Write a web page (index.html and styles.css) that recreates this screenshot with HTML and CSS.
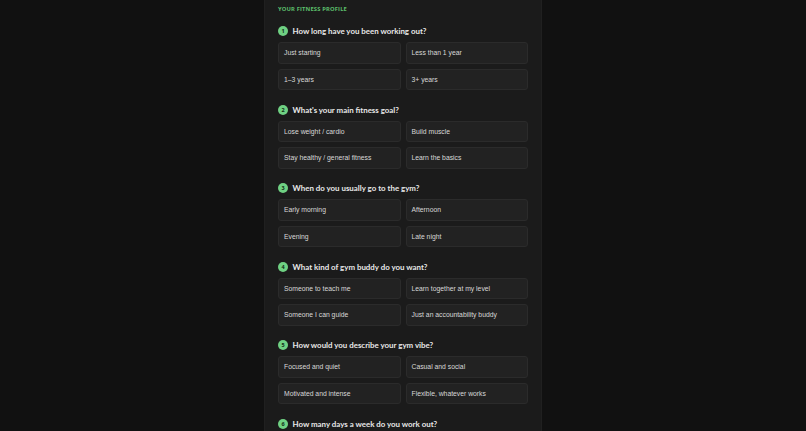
FILE: index.html
```html
<!DOCTYPE html>
<html lang="en">
<head>
<meta charset="utf-8">
<title>Your Fitness Profile</title>
<link rel="stylesheet" href="styles.css">
</head>
<body>
<main class="panel">
  <h1 class="label">Your Fitness Profile</h1>

  <section class="question">
    <h2 class="q-title"><span class="badge">1</span>How long have you been working out?</h2>
    <div class="options">
      <button class="opt">Just starting</button>
      <button class="opt">Less than 1 year</button>
      <button class="opt">1–3 years</button>
      <button class="opt">3+ years</button>
    </div>
  </section>

  <section class="question">
    <h2 class="q-title"><span class="badge">2</span>What's your main fitness goal?</h2>
    <div class="options">
      <button class="opt">Lose weight / cardio</button>
      <button class="opt">Build muscle</button>
      <button class="opt">Stay healthy / general fitness</button>
      <button class="opt">Learn the basics</button>
    </div>
  </section>

  <section class="question">
    <h2 class="q-title"><span class="badge">3</span>When do you usually go to the gym?</h2>
    <div class="options">
      <button class="opt">Early morning</button>
      <button class="opt">Afternoon</button>
      <button class="opt">Evening</button>
      <button class="opt">Late night</button>
    </div>
  </section>

  <section class="question">
    <h2 class="q-title"><span class="badge">4</span>What kind of gym buddy do you want?</h2>
    <div class="options">
      <button class="opt">Someone to teach me</button>
      <button class="opt">Learn together at my level</button>
      <button class="opt">Someone I can guide</button>
      <button class="opt">Just an accountability buddy</button>
    </div>
  </section>

  <section class="question">
    <h2 class="q-title"><span class="badge">5</span>How would you describe your gym vibe?</h2>
    <div class="options">
      <button class="opt">Focused and quiet</button>
      <button class="opt">Casual and social</button>
      <button class="opt">Motivated and intense</button>
      <button class="opt">Flexible, whatever works</button>
    </div>
  </section>

  <section class="question">
    <h2 class="q-title"><span class="badge">6</span>How many days a week do you work out?</h2>
  </section>
</main>
</body>
</html>
```

FILE: styles.css
```css
html, body {
  margin: 0;
  padding: 0;
  background: #111111;
  height: 100%;
  overflow: hidden;
}

body {
  display: flex;
  justify-content: center;
  font-family: "Liberation Sans", Arial, sans-serif;
}

.panel {
  box-sizing: border-box;
  width: 278px;
  background: #1b1b1b;
  border-left: 1px solid #202020;
  border-right: 1px solid #202020;
  padding: 5px 13px 0 13px;
  min-height: 100%;
}

.label {
  margin: 0 0 12px 0;
  font-family: "Open Sans", "Noto Sans", sans-serif;
  font-weight: 700;
  font-size: 5.8px;
  line-height: 8px;
  letter-spacing: 0.15px;
  text-transform: uppercase;
  color: #5bbf6b;
}

.question {
  margin-bottom: 13.5px;
}

.q-title {
  display: flex;
  align-items: center;
  gap: 4.5px;
  margin: 0 0 5px 0;
  height: 12px;
  font-family: Lato, "Open Sans", sans-serif;
  font-weight: 700;
  font-size: 7.9px;
  line-height: 12px;
  color: #e8e8e8;
}

.badge {
  display: inline-flex;
  align-items: center;
  justify-content: center;
  width: 10px;
  height: 10px;
  border-radius: 50%;
  background: #6fd183;
  color: #0f2a15;
  font-family: "Open Sans", sans-serif;
  font-size: 5.5px;
  font-weight: 700;
  flex: none;
}

.options {
  display: grid;
  grid-template-columns: 1fr 1fr;
  gap: 5px;
}

.opt {
  box-sizing: border-box;
  height: 21.5px;
  padding: 0 0 0 5px;
  text-align: left;
  background: #222222;
  border: 1px solid #2b2b2b;
  border-radius: 3px;
  color: #d8d8d8;
  font-family: "Liberation Sans", Arial, sans-serif;
  font-size: 6.8px;
}
```
